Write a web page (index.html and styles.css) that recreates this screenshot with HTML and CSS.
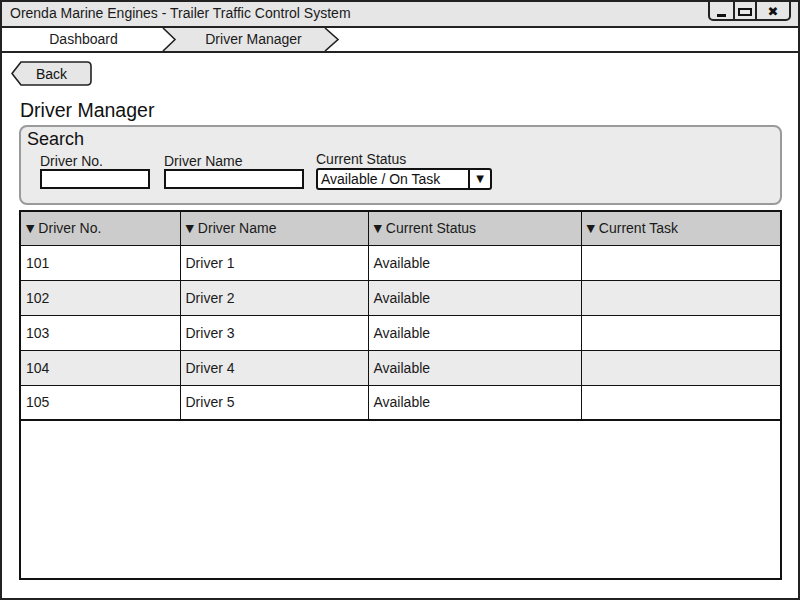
FILE: index.html
```html
<!DOCTYPE html>
<html>
<head>
<meta charset="utf-8">
<link rel="stylesheet" href="styles.css">
</head>
<body>
<div class="window">
  <div class="titlebar">
    <span class="title">Orenda Marine Engines - Trailer Traffic Control System</span>
    <div class="ctrls">
      <span class="ctrl min"><i></i></span>
      <span class="ctrl max"><i></i></span>
      <span class="ctrl close">&#x2716;</span>
    </div>
  </div>
  <div class="crumbs">
    <span class="crumb first">Dashboard</span>
    <span class="crumb second">Driver Manager</span>
  </div>
  <div class="content">
    <button class="back">Back</button>
    <h1 class="heading">Driver Manager</h1>
    <div class="search">
      <div class="search-title">Search</div>
      <div class="fields">
        <label class="field f1"><span class="lbl">Driver No.</span><span class="input"></span></label>
        <label class="field f2"><span class="lbl">Driver Name</span><span class="input"></span></label>
        <label class="field f3 status"><span class="lbl">Current Status</span>
          <span class="combo"><span class="combo-val">Available / On Task</span><span class="combo-btn">&#9660;</span></span>
        </label>
      </div>
    </div>
    <div class="grid">
      <table class="tbl">
        <colgroup><col class="c1"><col class="c2"><col class="c3"><col class="c4"></colgroup>
        <thead>
          <tr><th><span class="tri">&#9660;</span> Driver No.</th><th><span class="tri">&#9660;</span> Driver Name</th><th><span class="tri">&#9660;</span> Current Status</th><th><span class="tri">&#9660;</span> Current Task</th></tr>
        </thead>
        <tbody>
          <tr><td>101</td><td>Driver 1</td><td>Available</td><td></td></tr>
          <tr class="alt"><td>102</td><td>Driver 2</td><td>Available</td><td></td></tr>
          <tr><td>103</td><td>Driver 3</td><td>Available</td><td></td></tr>
          <tr class="alt"><td>104</td><td>Driver 4</td><td>Available</td><td></td></tr>
          <tr class="last"><td>105</td><td>Driver 5</td><td>Available</td><td></td></tr>
        </tbody>
      </table>
    </div>
  </div>
</div>
</body>
</html>
```

FILE: styles.css
```css
* { box-sizing: border-box; }
html, body { margin: 0; padding: 0; background: #fff; }
body { font-family: "Liberation Sans", Arial, sans-serif; color: #111; }

.window {
  width: 800px;
  height: 600px;
  border: 2px solid #222;
  background: #fff;
  display: flex;
  flex-direction: column;
}

.titlebar {
  height: 26px;
  background: #e6e6e6;
  border-bottom: 2px solid #222;
  display: flex;
  align-items: flex-start;
  justify-content: space-between;
}
.title {
  font-size: 14px;
  line-height: 22px;
  padding-left: 8px;
  color: #1a1a1a;
}
.ctrls {
  display: flex;
  height: 21px;
  margin-top: -2px;
  margin-right: 7px;
  border: 2px solid #222;
  border-radius: 0 0 5px 5px;
  background: #e6e6e6;
}
.ctrl {
  display: flex;
  align-items: center;
  justify-content: center;
  height: 100%;
}
.ctrl.min { width: 23px; }
.ctrl.max { width: 22px; border-left: 2px solid #222; }
.ctrl.close { width: 34px; border-left: 2px solid #222; font-size: 13px; font-weight: bold; color: #111; font-family: "DejaVu Sans", sans-serif; padding-top: 2px; }
.ctrl.min i { display: block; width: 9px; height: 3px; background: #111; margin-top: 9px; }
.ctrl.max i { display: block; width: 14px; height: 8px; border: 2px solid #111; margin-top: 3px; }

.crumbs {
  height: 25px;
  border-bottom: 2px solid #222;
  display: flex;
  background: #fff url("data:image/svg+xml;utf8,<svg xmlns='http://www.w3.org/2000/svg' width='400' height='23'><path d='M161 0 L323 0 L336 11.5 L323 23 L161 23 L173 11.5 Z' fill='%23e6e6e6'/><polyline points='161,0 173,11.5 161,23' fill='none' stroke='%23222' stroke-width='1.6'/><polyline points='323,0 336,11.5 323,23' fill='none' stroke='%23222' stroke-width='1.6'/></svg>") no-repeat 0 0;
}
.crumb {
  font-size: 14px;
  line-height: 23px;
  text-align: center;
  color: #1a1a1a;
}
.crumb.first { width: 163px; }
.crumb.second { width: 177px; }

.content {
  flex: 1;
  display: flex;
  flex-direction: column;
  padding: 8px 16px 18px 17px;
}

.back {
  align-self: flex-start;
  margin-left: -8px;
  width: 81px;
  height: 25px;
  border: none;
  padding: 0 0 0 0;
  font-family: inherit;
  font-size: 14px;
  color: #111;
  background: transparent url("data:image/svg+xml;utf8,<svg xmlns='http://www.w3.org/2000/svg' width='81' height='25'><path d='M10 1 L76 1 Q80 1 80 5 L80 20 Q80 24 76 24 L10 24 L1 12.5 Z' fill='%23e6e6e6' stroke='%23222' stroke-width='1.6' stroke-linejoin='round'/></svg>") no-repeat 0 0;
}

.heading {
  margin: 13px 0 0 1px;
  font-size: 19.5px;
  font-weight: normal;
  line-height: 22px;
  color: #111;
}

.search {
  margin-top: 4px;
  height: 80px;
  border: 2px solid #9a9a9a;
  border-radius: 8px;
  background: #ebebeb;
  padding: 3px 6px 0 6px;
}
.search-title {
  font-size: 18px;
  line-height: 19px;
  color: #111;
}
.fields {
  display: flex;
  align-items: flex-end;
  margin-top: 3px;
  padding-left: 13px;
}
.field {
  display: flex;
  flex-direction: column;
}
.lbl {
  font-size: 14px;
  line-height: 15px;
  color: #1a1a1a;
  margin-bottom: 0;
}
.input {
  display: block;
  height: 20px;
  border: 2px solid #111;
  background: #fff;
}
.f1 { margin-bottom: 2px; }
.f1 .input { width: 110px; }
.f2 { margin-left: 14px; margin-bottom: 2px; }
.f2 .lbl { padding-top: 2px; }
.f2 .input { width: 140px; }
.f3 { margin-left: 12px; margin-bottom: 1px; }
.f3 .lbl { margin-bottom: 1px; }
.combo {
  display: flex;
  width: 176px;
  height: 22px;
  border: 2px solid #111;
  border-radius: 3px;
  background: #fff;
}
.combo-val {
  flex: 1;
  font-size: 14px;
  line-height: 18px;
  padding-left: 3px;
  color: #111;
}
.combo-btn {
  width: 22px;
  border-left: 2px solid #111;
  font-size: 10px;
  line-height: 18px;
  text-align: center;
  color: #111;
  font-family: "DejaVu Sans", sans-serif;
}

.grid {
  margin-top: 5px;
  flex: 1;
  border: 2px solid #111;
  background: #fff;
  width: 763px;
}
.tbl {
  width: 100%;
  border-collapse: collapse;
  table-layout: fixed;
}
.c1 { width: 159px; }
.c2 { width: 188px; }
.c3 { width: 213px; }
.tbl th, .tbl td {
  font-size: 14px;
  font-weight: normal;
  text-align: left;
  padding: 0 0 0 5px;
  color: #1a1a1a;
  border-left: 1px solid #111;
  border-bottom: 1px solid #111;
  white-space: nowrap;
}
.tbl th:first-child, .tbl td:first-child { border-left: none; }
.tbl th { height: 33px; background: #cccccc; }
.tbl td { height: 35px; }
.tbl tr.alt td { background: #ebebeb; }
.tbl tr.last td { border-bottom: 2px solid #111; }
.tri { font-size: 11px; font-family: "DejaVu Sans", sans-serif; position: relative; top: -1px; }
```
